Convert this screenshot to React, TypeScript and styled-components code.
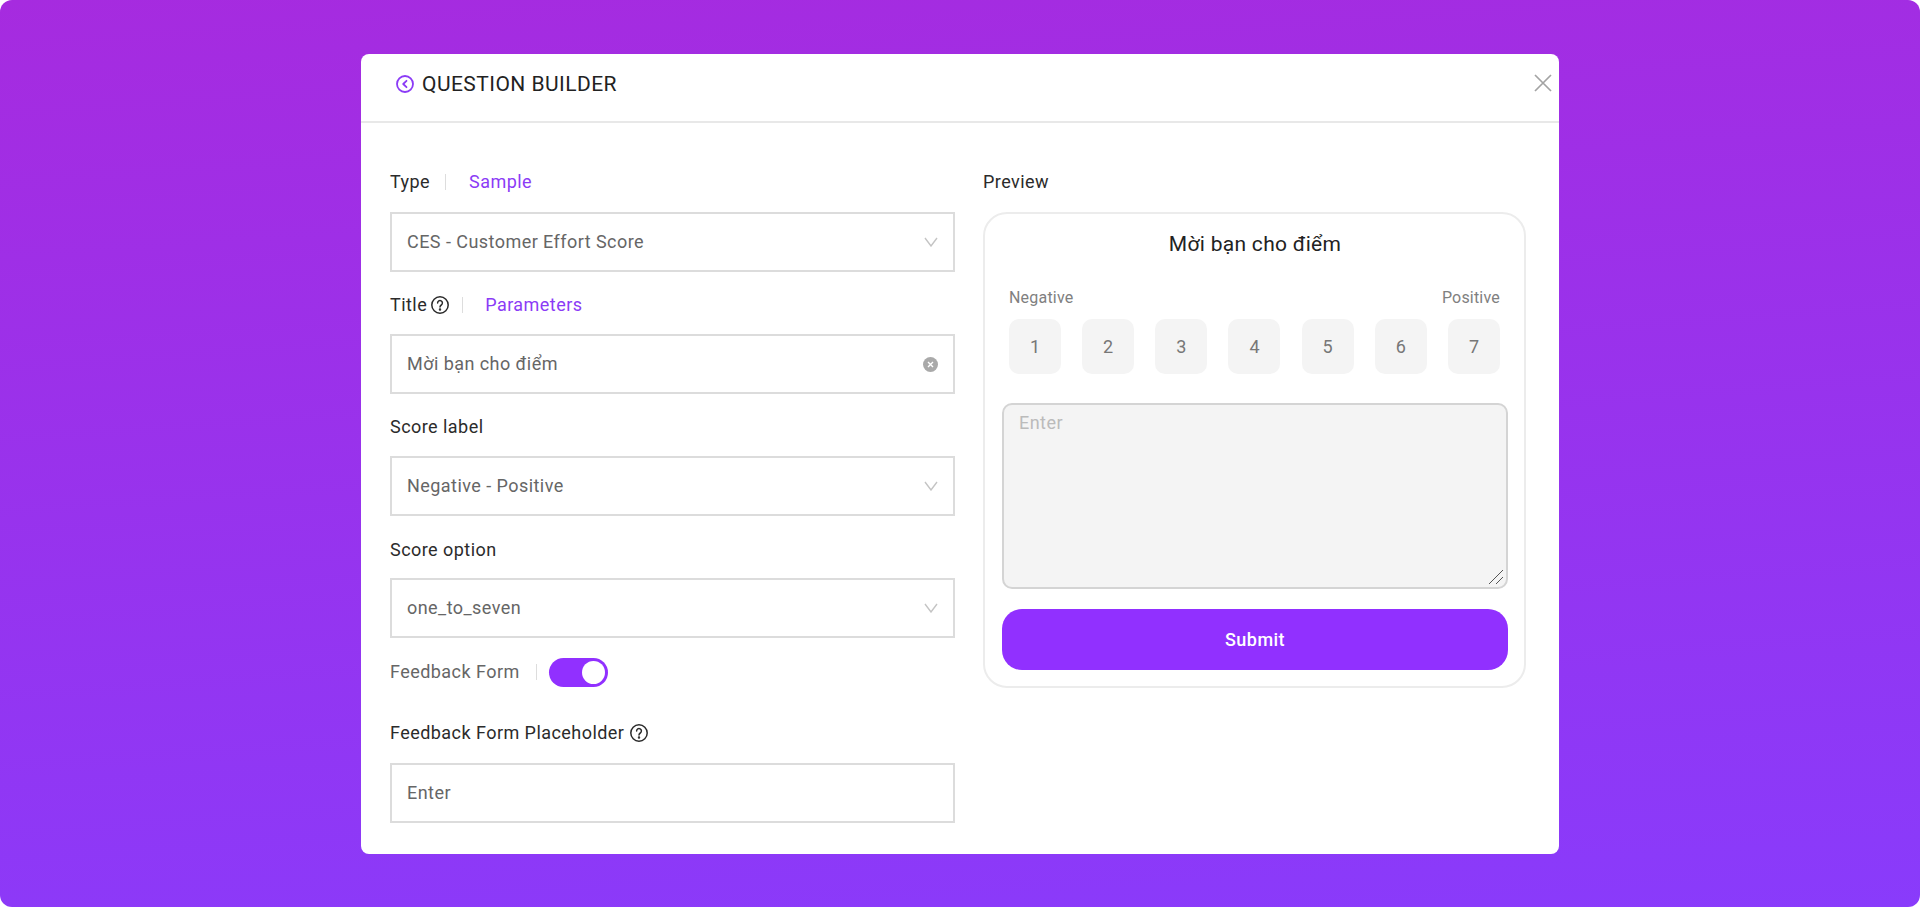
import React from 'react';
import styled, { createGlobalStyle } from 'styled-components';

const GlobalStyle = createGlobalStyle`
  html, body {
    margin: 0;
    padding: 0;
    background: #fff;
  }
  * {
    box-sizing: border-box;
  }
`;

const Page = styled.div`
  width: 1920px;
  height: 907px;
  padding-top: 54px;
  padding-left: 361px;
  border-radius: 12px;
  background: linear-gradient(176deg, #a62bdf 0%, #893bfb 100%);
  font-family: Roboto, 'Noto Sans', sans-serif;
  overflow: hidden;
`;

const Modal = styled.div`
  position: relative;
  width: 1198px;
  height: 800px;
  background: #fff;
  border-radius: 8px;
`;

const Header = styled.div`
  height: 69px;
  border-bottom: 2px solid #e8e8e8;
  display: flex;
  align-items: center;
  gap: 7px;
  padding: 0 0 8px 34px;
  font-size: 21px;
  letter-spacing: 0.45px;
  color: #222;
`;

const CloseButton = styled.button`
  position: absolute;
  top: 20px;
  right: 7px;
  width: 18px;
  height: 18px;
  padding: 0;
  border: 0;
  background: none;
  color: #a3a3a3;
`;

const Body = styled.div`
  display: flex;
  padding: 46px 33px 0 29px;
  gap: 28px;
`;

const FormColumn = styled.div`
  width: 565px;
  display: flex;
  flex-direction: column;
`;

const PreviewColumn = styled.div`
  width: 543px;
`;

const LabelRow = styled.div<{ $first?: boolean; $top?: number }>`
  height: ${(p) => (p.$first ? 43 : 62)}px;
  padding-top: ${(p) => (p.$first ? 3 : p.$top ?? 23)}px;
  display: flex;
  align-items: flex-start;
  font-size: 18px;
  letter-spacing: 0.45px;
  line-height: 20px;
  color: #2b2b2b;
`;

const Separator = styled.span<{ $wide?: boolean }>`
  width: 1px;
  height: 16px;
  margin: 2px ${(p) => (p.$wide ? 23 : 22)}px 0 ${(p) => (p.$wide ? 15 : 14)}px;
  background: #ddd;
`;

const Link = styled.span`
  color: #8b3bf6;
`;

const HelpIcon = styled.svg<{ $gap: number }>`
  width: 20px;
  height: 20px;
  margin: 0 -2px 0 ${(p) => p.$gap}px;
  flex: none;
`;

const Field = styled.div`
  height: 60px;
  border: 2px solid #dcdcdc;
  padding: 0 15px 2px;
  display: flex;
  align-items: center;
  justify-content: space-between;
  font-size: 18px;
  letter-spacing: 0.45px;
  color: #666;
`;

const ClearDot = styled.span`
  width: 15px;
  height: 15px;
  margin-top: 2px;
  border-radius: 50%;
  background: #a9a9a9;
  display: flex;
  align-items: center;
  justify-content: center;
`;

const ChevronIcon = styled.svg`
  width: 14px;
  height: 10px;
  margin-top: 2px;
`;

const ToggleRow = styled.div`
  height: 63px;
  padding-top: 20px;
  display: flex;
  align-items: flex-start;
  font-size: 18px;
  letter-spacing: 0.45px;
  line-height: 28px;
  color: #666;
`;

const ToggleSeparator = styled(Separator)`
  margin: 6px 12px 0 16px;
`;

const Toggle = styled.span`
  position: relative;
  width: 59px;
  height: 29px;
  border-radius: 15px;
  background: #9130ff;
`;

const Knob = styled.span`
  position: absolute;
  top: 3px;
  right: 3px;
  width: 23px;
  height: 23px;
  border-radius: 50%;
  background: #fff;
`;

const PreviewCard = styled.div`
  height: 476px;
  border: 2px solid #ececec;
  border-radius: 24px;
  padding: 0 16px 0 17px;
`;

const PreviewTitle = styled.div`
  height: 60px;
  display: flex;
  align-items: center;
  justify-content: center;
  font-size: 21px;
  letter-spacing: 0.3px;
  color: #222;
`;

const ScaleLabels = styled.div`
  display: flex;
  justify-content: space-between;
  height: 45px;
  padding: 15px 8px 0 7px;
  font-size: 16px;
  letter-spacing: 0.2px;
  line-height: 18px;
  color: #808080;
`;

const Scores = styled.div`
  display: flex;
  justify-content: space-between;
  padding: 0 8px 0 7px;
`;

const Score = styled.div`
  width: 52px;
  height: 55px;
  border-radius: 10px;
  background: #f4f4f4;
  display: flex;
  align-items: center;
  justify-content: center;
  font-size: 18px;
  color: #777;
`;

const FeedbackBox = styled.div`
  position: relative;
  height: 186px;
  margin-top: 29px;
  border: 2px solid #d4d4d4;
  border-radius: 10px;
  background: #f4f4f4;
  padding: 8px 15px;
  font-size: 18px;
  letter-spacing: 0.45px;
  line-height: 20px;
  color: #bbb;
`;

const ResizeGrip = styled.svg`
  position: absolute;
  right: 1px;
  bottom: 1px;
  width: 18px;
  height: 18px;
`;

const SubmitButton = styled.button`
  display: block;
  width: 100%;
  height: 61px;
  margin-top: 20px;
  border: 0;
  border-radius: 20px;
  background: #9130ff;
  color: #fff;
  font-family: inherit;
  font-size: 18px;
  letter-spacing: 0.45px;
  font-weight: 500;
`;

const BackIcon = () => (
  <svg width="20" height="20" viewBox="0 0 20 20" fill="none" stroke="#8b3bf6" strokeWidth="1.8">
    <circle cx="10" cy="10" r="8" />
    <path d="M11.5 6.8 8.2 10l3.3 3.2" strokeLinecap="round" strokeLinejoin="round" />
  </svg>
);

const Help = ({ gap = 3 }: { gap?: number }) => (
  <HelpIcon $gap={gap} viewBox="0 0 20 20" fill="none" stroke="#2b2b2b" strokeWidth="1.5">
    <circle cx="10" cy="10" r="8.2" />
    <path d="M7.6 8a2.4 2.4 0 1 1 3.7 2c-.9.6-1.3 1-1.3 2" strokeLinecap="round" />
    <circle cx="10" cy="14.4" r=".5" fill="#2b2b2b" />
  </HelpIcon>
);

const Chevron = () => (
  <ChevronIcon viewBox="0 0 14 10" fill="none" stroke="#c4c4c4" strokeWidth="1.4">
    <path d="M1 1l6 8 6-8" />
  </ChevronIcon>
);

const scores = [1, 2, 3, 4, 5, 6, 7];

export default function App() {
  return (
    <>
      <GlobalStyle />
      <Page>
        <Modal>
          <Header>
            <BackIcon />
            QUESTION BUILDER
          </Header>
          <CloseButton aria-label="Close">
            <svg width="18" height="18" viewBox="0 0 18 18" stroke="currentColor" strokeWidth="1.7">
              <path d="M1 1l16 16M17 1 1 17" />
            </svg>
          </CloseButton>
          <Body>
            <FormColumn>
              <LabelRow $first>
                Type<Separator $wide /><Link>Sample</Link>
              </LabelRow>
              <Field>
                CES - Customer Effort Score
                <Chevron />
              </Field>
              <LabelRow>
                Title<Help /><Separator /><Link>Parameters</Link>
              </LabelRow>
              <Field>
                Mời bạn cho điểm
                <ClearDot>
                  <svg width="7" height="7" viewBox="0 0 7 7" stroke="#fff" strokeWidth="1.4">
                    <path d="M1 1l5 5M6 1 1 6" />
                  </svg>
                </ClearDot>
              </Field>
              <LabelRow>Score label</LabelRow>
              <Field>
                Negative - Positive
                <Chevron />
              </Field>
              <LabelRow $top={24}>Score option</LabelRow>
              <Field>
                one_to_seven
                <Chevron />
              </Field>
              <ToggleRow>
                Feedback Form
                <ToggleSeparator />
                <Toggle>
                  <Knob />
                </Toggle>
              </ToggleRow>
              <LabelRow $top={22}>
                Feedback Form Placeholder<Help gap={5} />
              </LabelRow>
              <Field>Enter</Field>
            </FormColumn>
            <PreviewColumn>
              <LabelRow $first>Preview</LabelRow>
              <PreviewCard>
                <PreviewTitle>Mời bạn cho điểm</PreviewTitle>
                <ScaleLabels>
                  <span>Negative</span>
                  <span>Positive</span>
                </ScaleLabels>
                <Scores>
                  {scores.map((n) => (
                    <Score key={n}>{n}</Score>
                  ))}
                </Scores>
                <FeedbackBox>
                  Enter
                  <ResizeGrip viewBox="0 0 18 18" stroke="#555" strokeWidth="1">
                    <path d="M2 16 16 2M9 16l7-7" />
                  </ResizeGrip>
                </FeedbackBox>
                <SubmitButton>Submit</SubmitButton>
              </PreviewCard>
            </PreviewColumn>
          </Body>
        </Modal>
      </Page>
    </>
  );
}
